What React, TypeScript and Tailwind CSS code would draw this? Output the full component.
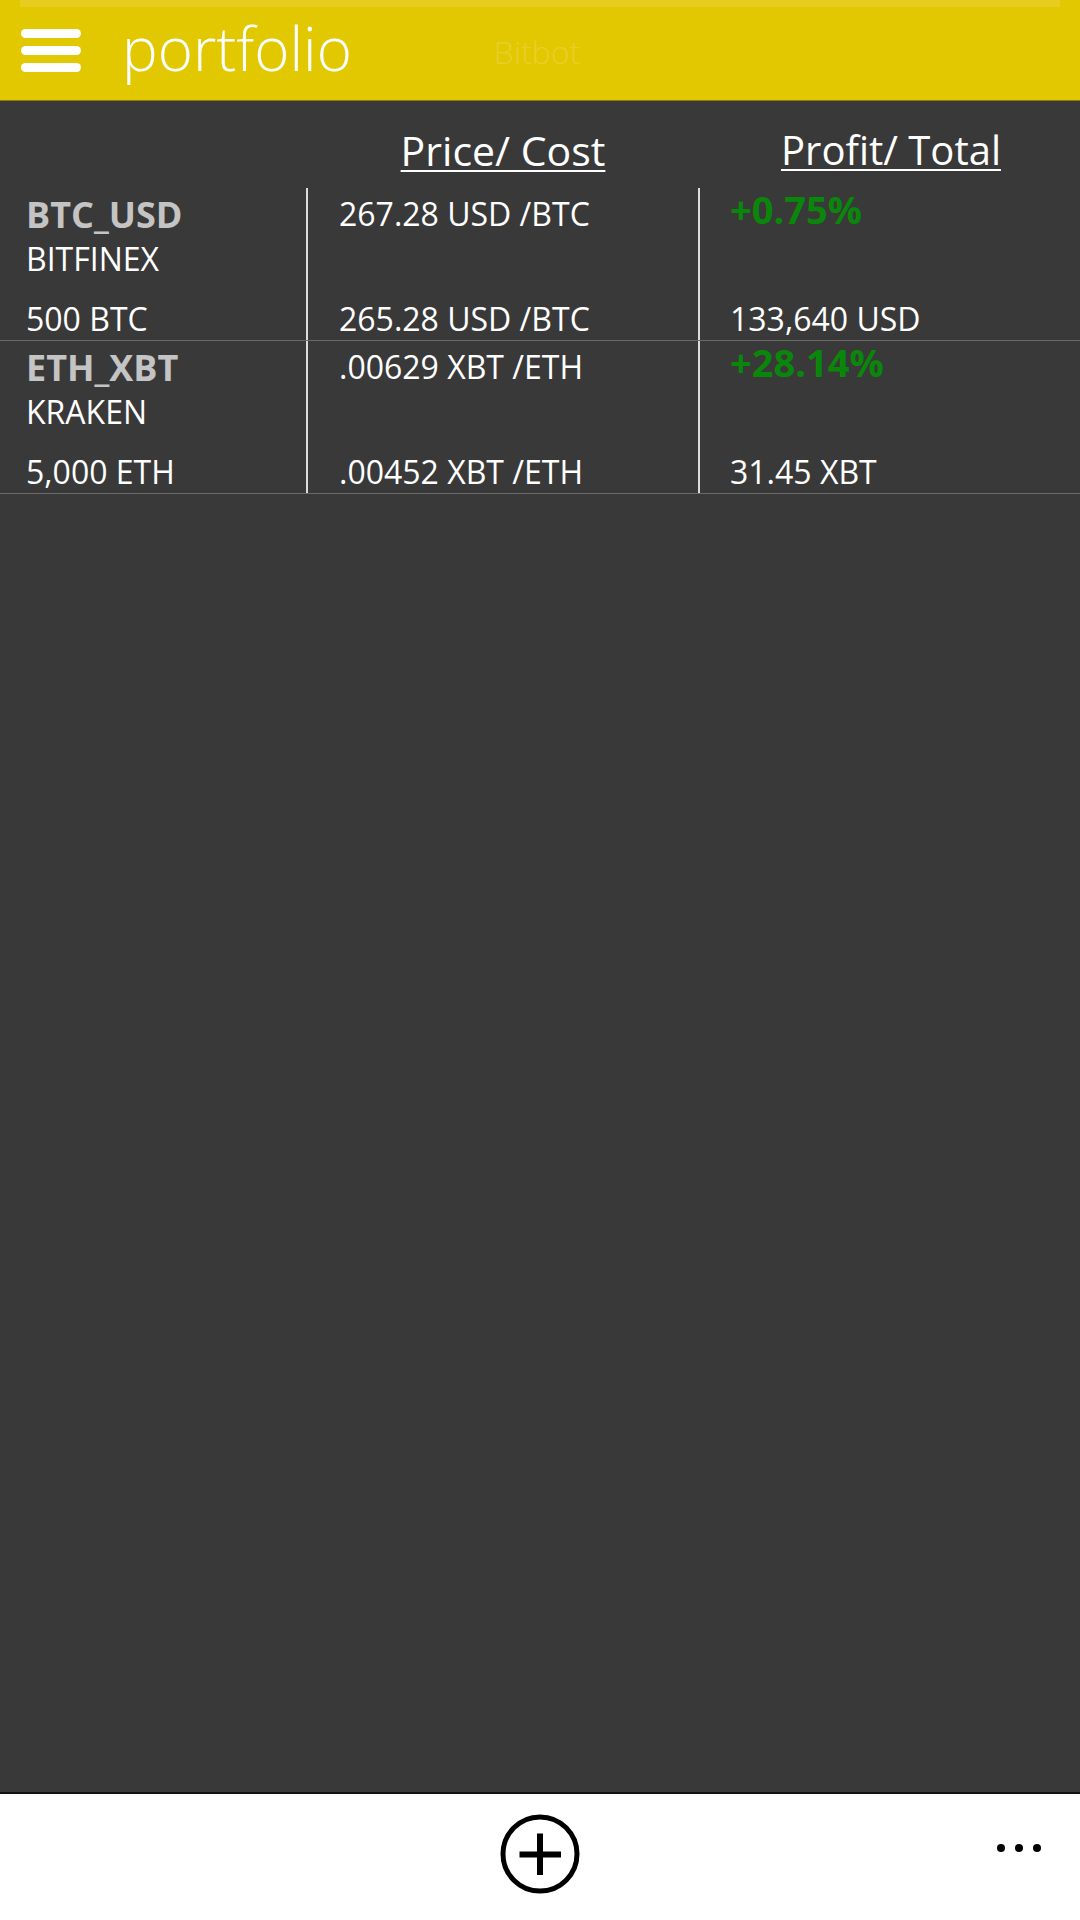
import React from "react";

const font = { fontFamily: '"Open Sans", "Noto Sans", sans-serif' };

type Row = {
  pair: string;
  exchange: string;
  amount: string;
  price: string;
  cost: string;
  profit: string;
  total: string;
};

const rows: Row[] = [
  {
    pair: "BTC_USD",
    exchange: "BITFINEX",
    amount: "500 BTC",
    price: "267.28 USD /BTC",
    cost: "265.28 USD /BTC",
    profit: "+0.75%",
    total: "133,640 USD",
  },
  {
    pair: "ETH_XBT",
    exchange: "KRAKEN",
    amount: "5,000 ETH",
    price: ".00629 XBT /ETH",
    cost: ".00452 XBT /ETH",
    profit: "+28.14%",
    total: "31.45 XBT",
  },
];

function PortfolioRow({ r }: { r: Row }) {
  return (
    <div className="grid grid-cols-[306px_392px_1fr] h-[153px] border-b border-[#6a6a6a]">
      <div className="flex flex-col pl-[26px]">
        <div className="mt-[9px] text-[36px] leading-none font-bold text-[#c4c4c4]">{r.pair}</div>
        <div className="mt-[10px] text-[32px] leading-none text-white">{r.exchange}</div>
        <div className="mt-[28px] text-[32px] leading-none text-white">{r.amount}</div>
      </div>
      <div className="flex flex-col border-l-2 border-[#dcdcdc] pl-[31px]">
        <div className="mt-[10px] text-[32px] leading-none text-white">{r.price}</div>
        <div className="mt-[73px] text-[32px] leading-none text-white">{r.cost}</div>
      </div>
      <div className="flex flex-col border-l-2 border-[#dcdcdc] pl-[30px]">
        <div className="mt-[2px] text-[38px] leading-none font-bold text-[#0a870a]">{r.profit}</div>
        <div className="mt-[75px] text-[32px] leading-none text-white">{r.total}</div>
      </div>
    </div>
  );
}

export default function App() {
  return (
    <div className="w-[1080px] h-[1920px] flex flex-col bg-[#393939]" style={font}>
      {/* Header */}
      <div className="h-[101px] flex flex-col bg-[#e2c800] border-b border-[#8a7c12]">
        <div className="mx-[20px] h-[7px] bg-[#e6cd1f]" />
        <div className="flex items-start pl-[21px]">
          <div className="mt-[22px] flex flex-col gap-[8px] w-[60px]">
            <div className="h-[9px] rounded-full bg-white" />
            <div className="h-[9px] rounded-full bg-white" />
            <div className="h-[9px] rounded-full bg-white" />
          </div>
          <div className="ml-[41px] mt-[11px] text-[60px] leading-none font-light text-white">portfolio</div>
          <div className="ml-[142px] mt-[29px] text-[32px] leading-none font-light text-[#e8cf2c]">Bitbot</div>
        </div>
      </div>

      {/* Main */}
      <div className="flex-1 flex flex-col">
        <div className="grid grid-cols-[306px_392px_1fr] h-[87px]">
          <div />
          <div className="flex justify-center pt-[29px] pl-[2px]">
            <span className="text-[41px] leading-none text-white underline decoration-2 underline-offset-[4px]">Price/ Cost</span>
          </div>
          <div className="flex justify-center pt-[29px] pl-[4px]">
            <span className="text-[40px] leading-none text-white underline decoration-2 underline-offset-[4px]">Profit/ Total</span>
          </div>
        </div>
        {rows.map((r) => (
          <PortfolioRow key={r.pair} r={r} />
        ))}
      </div>

      {/* App bar */}
      <div className="h-[128px] bg-white border-t-2 border-[#111111] grid grid-cols-[1fr_auto_1fr]">
        <div />
        <div className="pt-[20px]">
          <svg width="80" height="80" viewBox="0 0 80 80">
            <circle cx="40" cy="40" r="37" fill="none" stroke="#000" strokeWidth="5" />
            <path d="M40 19.5 V61 M19.5 40.5 H61" stroke="#000" strokeWidth="6" fill="none" />
          </svg>
        </div>
        <div className="flex justify-end items-start pr-[39px] pt-[50px]">
          <div className="flex gap-[10px]">
            <div className="w-[8px] h-[8px] rounded-full bg-black" />
            <div className="w-[8px] h-[8px] rounded-full bg-black" />
            <div className="w-[8px] h-[8px] rounded-full bg-black" />
          </div>
        </div>
      </div>
    </div>
  );
}
